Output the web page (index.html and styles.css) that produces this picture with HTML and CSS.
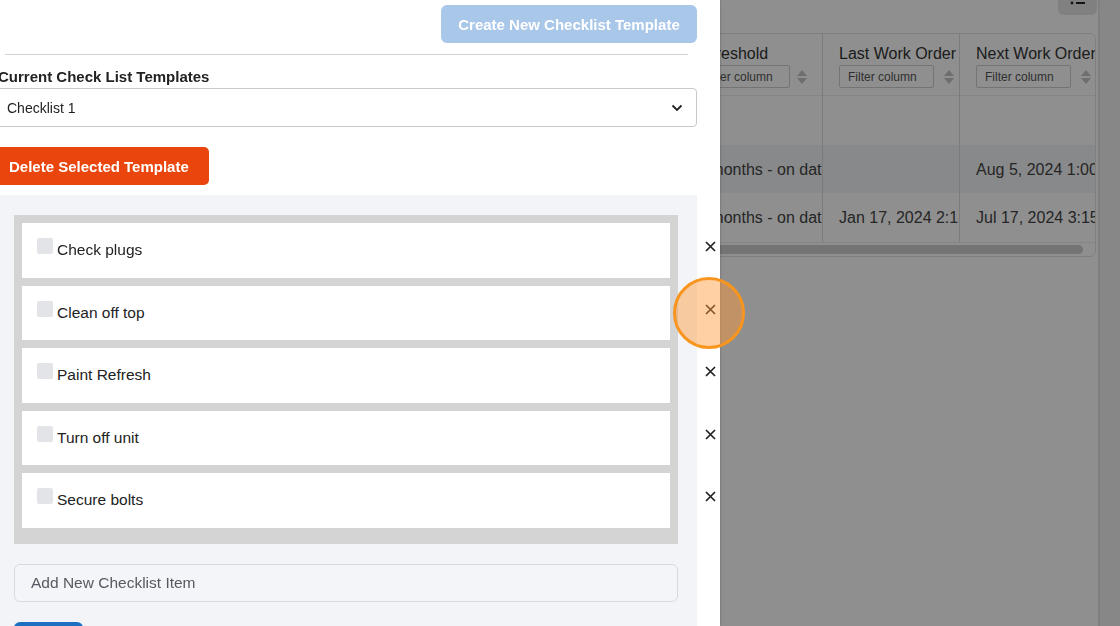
FILE: index.html
```html
<!DOCTYPE html>
<html lang="en">
<head>
  <meta charset="UTF-8" />
  <meta name="viewport" content="width=device-width, initial-scale=1" />
  <title>Checklist Templates</title>
  <link rel="stylesheet" href="styles.css">
</head>
<body>

<!-- Work order schedule page behind the drawer -->
<div class="page">
  <main class="page-main">
    <div class="toolbar">
      <button class="icon-btn" aria-label="Columns">
        <svg width="20" height="20" viewBox="0 0 20 20">
          <circle cx="4" cy="6" r="1.4" fill="#222"/>
          <circle cx="4" cy="12" r="1.4" fill="#222"/>
          <path d="M8 6h9M8 12h9" stroke="#222" stroke-width="1.8"/>
        </svg>
      </button>
    </div>

    <div class="table-card">
      <div class="table-scroll">
        <div class="col">
          <div class="th">
            <span class="th-title">Threshold</span>
            <div class="th-filter"><input class="filter" placeholder="Filter column"><span class="sort"></span></div>
          </div>
          <div class="td"></div>
          <div class="td striped">6 months - on date of last</div>
          <div class="td">6 months - on date of last</div>
        </div>
        <div class="col">
          <div class="th">
            <span class="th-title">Last Work Order</span>
            <div class="th-filter"><input class="filter" placeholder="Filter column"><span class="sort"></span></div>
          </div>
          <div class="td"></div>
          <div class="td striped"></div>
          <div class="td">Jan 17, 2024 2:15 PM</div>
        </div>
        <div class="col">
          <div class="th">
            <span class="th-title">Next Work Order</span>
            <div class="th-filter"><input class="filter" placeholder="Filter column"><span class="sort"></span></div>
          </div>
          <div class="td"></div>
          <div class="td striped">Aug 5, 2024 1:00 PM</div>
          <div class="td">Jul 17, 2024 3:15 PM</div>
        </div>
      </div>
      <div class="hscroll"><div class="hscroll-thumb"></div></div>
    </div>
  </main>
  <div class="page-scrollbar"></div>
</div>

<div class="backdrop"></div>

<!-- Checklist template drawer -->
<aside class="drawer">
  <div class="drawer-inner">
    <div class="drawer-head">
      <button class="btn btn-create" disabled>Create New Checklist Template</button>
    </div>
    <hr class="divider">

    <label class="field-label">Current Check List Templates</label>
    <div class="select">
      <span>Checklist 1</span>
      <svg width="12" height="8" viewBox="0 0 12 8"><path d="M1.5 1.5l4.5 4.5 4.5-4.5" fill="none" stroke="#222" stroke-width="1.8"/></svg>
    </div>

    <button class="btn btn-delete">Delete Selected Template</button>

    <section class="items-section">
      <div class="items">
        <div class="item-row">
          <div class="item"><span class="check"></span><span class="item-text">Check plugs</span></div>
          <button class="remove" aria-label="Remove">
            <svg width="11" height="11" viewBox="0 0 11 11"><path d="M1 1l9 9M10 1l-9 9" stroke="#222" stroke-width="1.7"/></svg>
          </button>
        </div>
        <div class="item-row">
          <div class="item"><span class="check"></span><span class="item-text">Clean off top</span></div>
          <button class="remove" aria-label="Remove">
            <svg width="11" height="11" viewBox="0 0 11 11"><path d="M1 1l9 9M10 1l-9 9" stroke="#222" stroke-width="1.7"/></svg>
          </button>
        </div>
        <div class="item-row">
          <div class="item"><span class="check"></span><span class="item-text">Paint Refresh</span></div>
          <button class="remove" aria-label="Remove">
            <svg width="11" height="11" viewBox="0 0 11 11"><path d="M1 1l9 9M10 1l-9 9" stroke="#222" stroke-width="1.7"/></svg>
          </button>
        </div>
        <div class="item-row">
          <div class="item"><span class="check"></span><span class="item-text">Turn off unit</span></div>
          <button class="remove" aria-label="Remove">
            <svg width="11" height="11" viewBox="0 0 11 11"><path d="M1 1l9 9M10 1l-9 9" stroke="#222" stroke-width="1.7"/></svg>
          </button>
        </div>
        <div class="item-row">
          <div class="item"><span class="check"></span><span class="item-text">Secure bolts</span></div>
          <button class="remove" aria-label="Remove">
            <svg width="11" height="11" viewBox="0 0 11 11"><path d="M1 1l9 9M10 1l-9 9" stroke="#222" stroke-width="1.7"/></svg>
          </button>
        </div>
      </div>

      <input class="new-item" placeholder="Add New Checklist Item">
      <button class="btn btn-add">Add</button>
    </section>
  </div>
</aside>

<!-- click highlight -->
<div class="tap-ring"></div>

</body>
</html>
```

FILE: styles.css
```css
* {
  margin: 0;
  padding: 0;
  box-sizing: border-box;
}

body {
  font-family: 'Liberation Sans', Arial, sans-serif;
  color: #222;
  height: 626px;
  overflow: hidden;
  position: relative;
  background: #fff;
}

button, input {
  font-family: inherit;
}

/* Page behind the drawer */
.page {
  display: flex;
  height: 100%;
}

.page-main {
  flex: 1;
  overflow: hidden;
}

.page-scrollbar {
  width: 22px;
  background: #f1f1f1;
  border-left: 2px solid #e4e4e4;
}

.toolbar {
  display: flex;
  justify-content: flex-end;
  height: 33px;
  padding-right: 1px;
}

.icon-btn {
  width: 39px;
  height: 28px;
  margin-top: -13px;
  border: none;
  border-radius: 6px;
  background: #e4e4e4;
  display: flex;
  align-items: flex-end;
  justify-content: center;
  padding-bottom: 4px;
}

.table-card {
  margin-left: 682px;
  width: 414px;
  border: 1px solid #e2e2e2;
  border-radius: 6px;
  overflow: hidden;
  background: #fff;
}

.table-scroll {
  display: flex;
}

.col {
  width: 140px;
  flex: 0 0 auto;
  border-right: 1px solid #dcdcdc;
  overflow: hidden;
}

.col:nth-child(2) {
  width: 137px;
}

.col:last-child {
  width: 136px;
  border-right: none;
}

.th {
  height: 62px;
  padding: 10px 0 0 16px;
  background: #fff;
  border-bottom: 1px solid #eee;
}

.th-title {
  display: block;
  font-size: 16px;
  color: #333;
  white-space: nowrap;
  line-height: 20px;
}

.th-filter {
  display: flex;
  align-items: center;
  margin-top: 1px;
}

.filter {
  width: 95px;
  height: 23px;
  border: 1px solid #cfcfcf;
  border-radius: 2px;
  padding-left: 8px;
  font-size: 12px;
  color: #444;
  background: #fff;
  flex: 0 0 auto;
}

.filter::placeholder {
  color: #555;
}

.sort {
  margin-left: 10px;
  width: 0;
  height: 0;
  border-left: 5px solid transparent;
  border-right: 5px solid transparent;
  border-bottom: 6px solid #c4c4c4;
  position: relative;
  top: -4px;
  flex: 0 0 auto;
}

.sort::after {
  content: '';
  position: absolute;
  left: -5px;
  top: 8px;
  border-left: 5px solid transparent;
  border-right: 5px solid transparent;
  border-top: 6px solid #c4c4c4;
}

.col:first-child .th {
  padding-left: 14px;
}

.col:first-child .th-filter {
  margin-left: -2px;
}

.col:first-child .sort {
  margin-left: 7px;
}

.td {
  height: 48.5px;
  padding: 15px 0 0 16px;
  font-size: 16px;
  color: #444;
  white-space: nowrap;
  overflow: hidden;
  line-height: 20px;
}

.col:first-child .td {
  padding-left: 14px;
}

.td.striped {
  background: #f3f4f6;
}

.hscroll {
  height: 14px;
  padding: 2px 12px 2px 0;
  border-top: 1px solid #eee;
}

.hscroll-thumb {
  height: 9px;
  border-radius: 5px;
  background: #cfcfcf;
}

/* Dimmed backdrop */
.backdrop {
  position: fixed;
  inset: 0;
  background: rgba(0, 0, 0, 0.44);
}

/* Drawer */
.drawer {
  position: fixed;
  top: 0;
  left: 0;
  width: 720px;
  height: 100%;
  background: #fff;
  box-shadow: 1px 0 2px rgba(0, 0, 0, 0.15);
  overflow: hidden;
}

.drawer-inner {
  margin-left: -4px;
  width: 701px;
}

.drawer-head {
  display: flex;
  justify-content: flex-end;
  padding-top: 5px;
}

.btn {
  border: none;
  border-radius: 6px;
  color: #fff;
  font-weight: bold;
  font-size: 15px;
  height: 38px;
  cursor: pointer;
}

.btn-create {
  width: 256px;
  background: #a9c7e8;
  cursor: default;
}

.divider {
  border: none;
  border-top: 1px solid #d2d2d2;
  margin: 11px 9px 0 9px;
}

.field-label {
  display: block;
  font-weight: bold;
  font-size: 15px;
  color: #222;
  padding-left: 2px;
  margin-top: 13px;
  line-height: 18px;
}

.select {
  margin-top: 2px;
  height: 39px;
  border: 1px solid #c9c9c9;
  border-radius: 4px;
  display: flex;
  align-items: center;
  justify-content: space-between;
  padding: 0 13px 0 10px;
  font-size: 14px;
  color: #222;
}

.btn-delete {
  margin-top: 20px;
  width: 213px;
  text-align: left;
  padding-left: 13px;
  background: #e9450c;
  border-radius: 5px;
  display: block;
}

.items-section {
  margin-top: 10px;
  background: #f2f4f8;
  padding: 20px 19px 40px 18px;
}

.items {
  background: #d4d4d4;
  padding: 8px;
}

.item-row {
  display: flex;
  align-items: flex-start;
  margin-bottom: 8px;
}

.item {
  flex: 0 0 648px;
  height: 54.5px;
  background: #fff;
  display: flex;
  align-items: flex-start;
  padding: 15px;
}

.check {
  width: 16px;
  height: 16px;
  border-radius: 2px;
  background: #e2e4e8;
  flex: 0 0 auto;
}

.item-text {
  margin-left: 4px;
  margin-top: 2px;
  font-size: 15.5px;
  line-height: 20px;
  color: #222;
}

.remove {
  margin: 18px 0 0 35px;
  width: 11px;
  height: 11px;
  border: none;
  background: none;
  display: flex;
  flex: 0 0 auto;
}

.new-item {
  display: block;
  width: 100%;
  margin-top: 20px;
  height: 38px;
  border: 1px solid #d6d9de;
  border-radius: 6px;
  background: #f4f5f8;
  padding-left: 16px;
  font-size: 15.5px;
}

.new-item::placeholder {
  color: #555a60;
}

.btn-add {
  margin-top: 20px;
  width: 69px;
  background: #1d6fc1;
  display: block;
}

/* Click highlight ring */
.tap-ring {
  position: absolute;
  left: 673px;
  top: 277px;
  width: 72px;
  height: 72px;
  border-radius: 50%;
  border: 3px solid #f8951f;
  background: rgba(255, 150, 50, 0.45);
}
```
